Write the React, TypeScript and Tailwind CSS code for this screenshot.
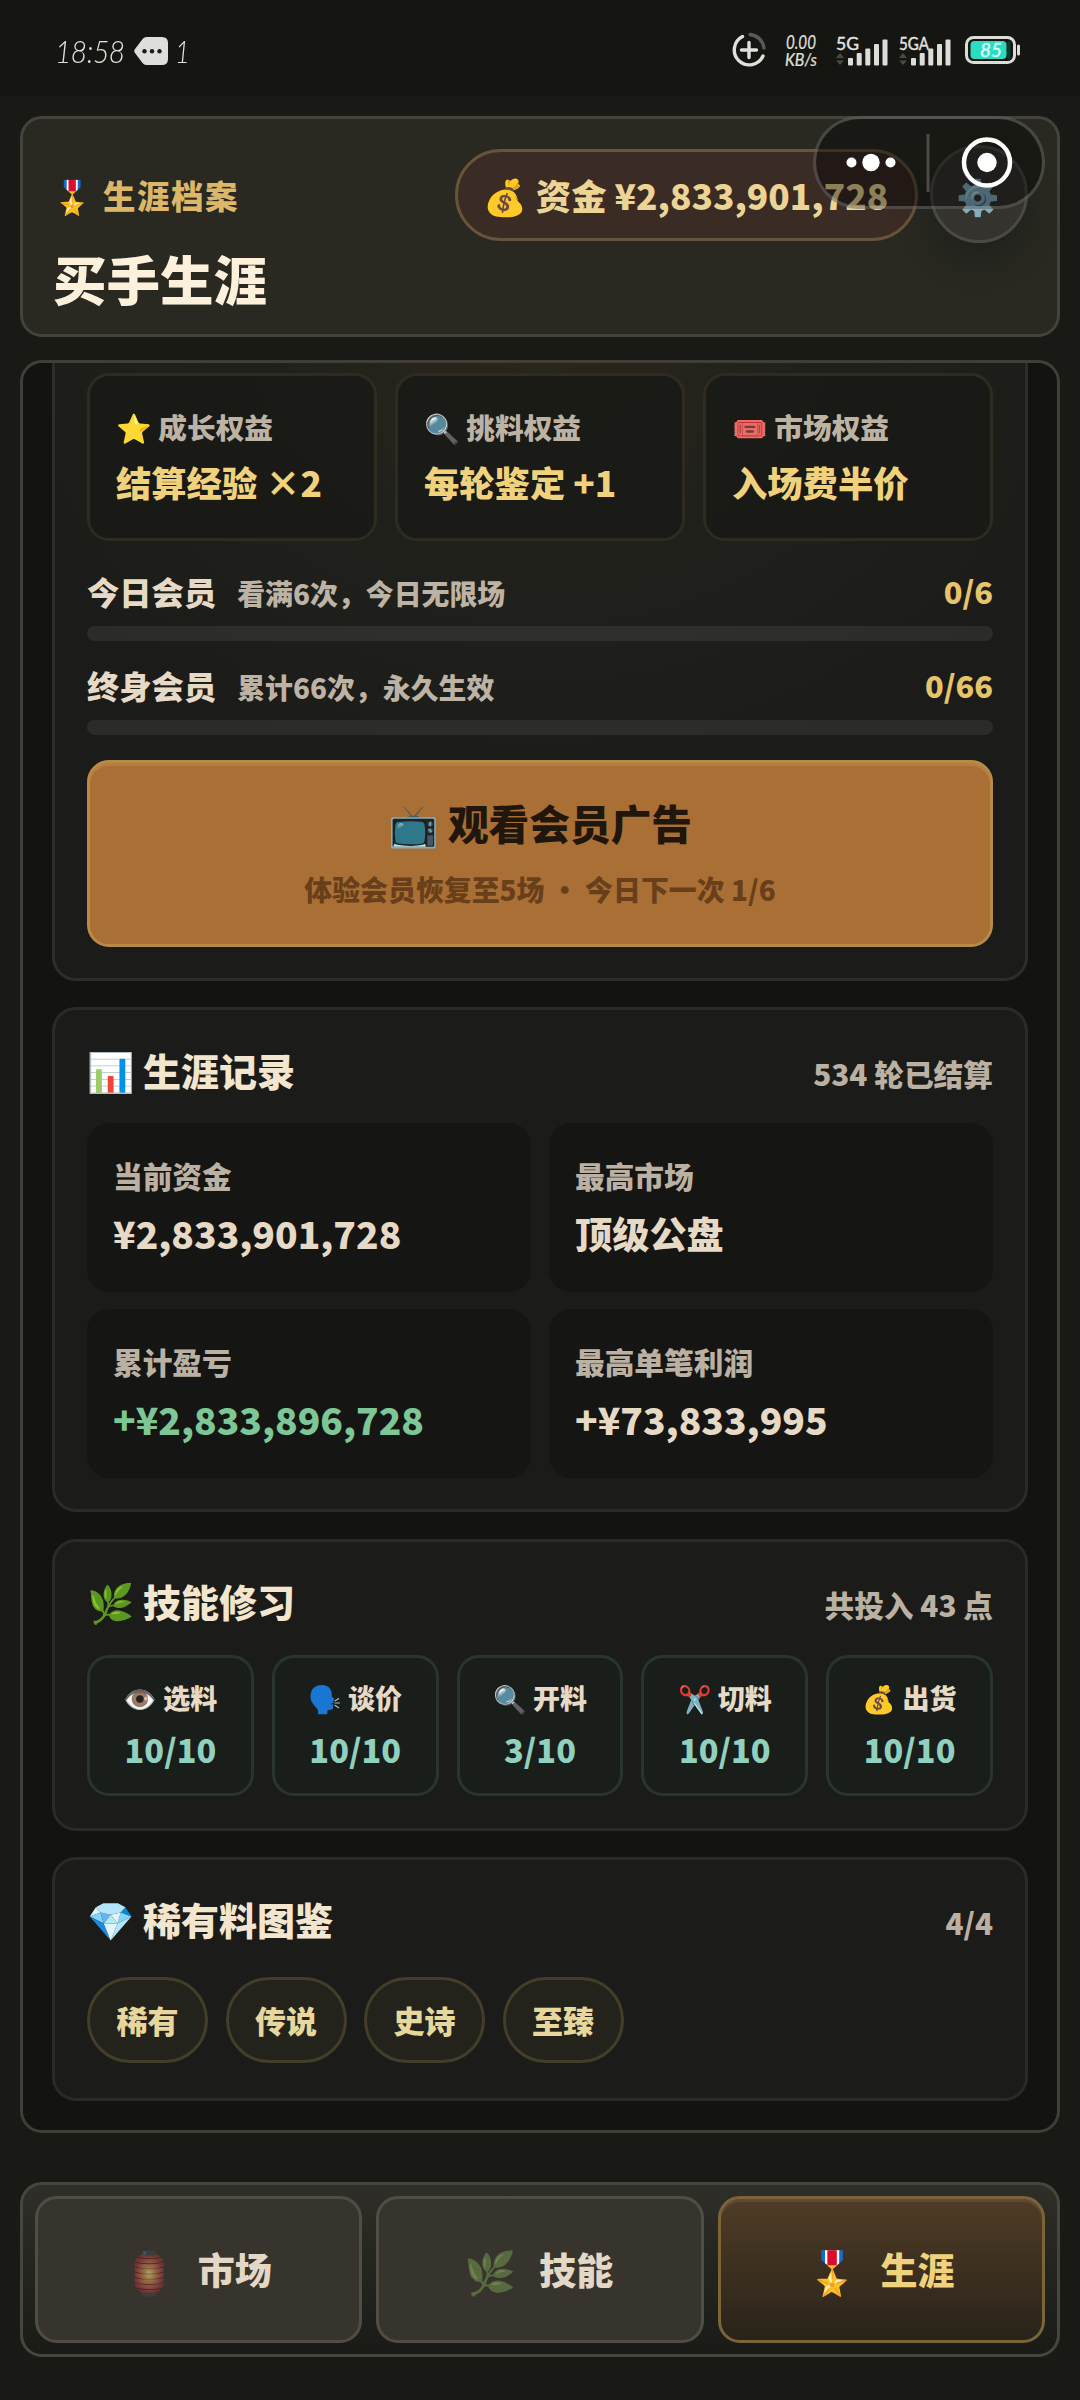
import type { ReactNode } from "react";

const perks = [
  { icon: "⭐", label: "成长权益", value: "结算经验 ×2" },
  { icon: "🔍", label: "挑料权益", value: "每轮鉴定 +1" },
  { icon: "🎟️", label: "市场权益", value: "入场费半价" },
];

const memberships = [
  { name: "今日会员", note: "看满6次，今日无限场", progress: "0/6", gap: "mt-[30px]" },
  { name: "终身会员", note: "累计66次，永久生效", progress: "0/66", gap: "mt-[24px]" },
];

const records = [
  { label: "当前资金", value: "¥2,833,901,728", color: "text-[#e6dac6]" },
  { label: "最高市场", value: "顶级公盘", color: "text-[#e6dac6]" },
  { label: "累计盈亏", value: "+¥2,833,896,728", color: "text-[#7cc795]" },
  { label: "最高单笔利润", value: "+¥73,833,995", color: "text-[#e6dac6]" },
];

const skills = [
  { icon: "👁️", label: "选料", value: "10/10" },
  { icon: "🗣️", label: "谈价", value: "10/10" },
  { icon: "🔍", label: "开料", value: "3/10" },
  { icon: "✂️", label: "切料", value: "10/10" },
  { icon: "💰", label: "出货", value: "10/10" },
];

const rarities = ["稀有", "传说", "史诗", "至臻"];

function Signal({ label, labelWidth }: { label: string; labelWidth: number }) {
  return (
    <svg className="overflow-visible" width="54" height="54" viewBox="0 -10 54 54" fill="#dcdcd8">
      <text
        x="0"
        y="15.500"
        fontSize="18"
        fontFamily="Lato"
        fill="#e4e4e0"
        stroke="#e4e4e0"
        strokeWidth="0.4"
        textLength={labelWidth}
        lengthAdjust="spacingAndGlyphs"
      >
        {label}
      </text>
      <path d="M0 24 4 19 8 24ZM0 26.500 4 31 8 26.500Z" fill="#4a4a46" />
      <rect x="12" y="24" width="5" height="7.500" rx="1" />
      <rect x="20.700" y="19" width="5" height="12.500" rx="1" />
      <rect x="29.300" y="14.500" width="5" height="17" rx="1" />
      <rect x="38" y="10" width="5" height="21.500" rx="1" />
      <rect x="46.500" y="5.500" width="5" height="26" rx="1" />
    </svg>
  );
}

function StatusBar() {
  return (
    <div className="flex h-[96px] shrink-0 items-start justify-between bg-[#151611] pl-[54px] pr-[59px] font-['Lato'] text-[#e0e0dc]">
      <div className="flex h-[102px] items-center">
        <span className="w-[68px] origin-left scale-x-[0.88] pl-[1px] text-[32px] leading-[44px] font-light whitespace-nowrap italic tracking-[-0.5px]">18:58</span>
        <svg className="ml-[12px]" width="34" height="28" viewBox="0 0 34 28">
          <path d="M9 1.500Q10.500 0 12.500 0H28Q34 0 34 6V22Q34 28 28 28H12.500Q10 28 8.500 26L1 16Q-.5 14 1 12Z" fill="#dededc" />
          <circle cx="10.500" cy="14.300" r="2.200" fill="#1b1b18" />
          <circle cx="18" cy="14.300" r="2.200" fill="#1b1b18" />
          <circle cx="25.500" cy="14.300" r="2.200" fill="#1b1b18" />
        </svg>
        <span className="ml-[7px] origin-left scale-x-[0.8] text-[32px] leading-[44px] font-light italic">1</span>
      </div>
      <div className="flex h-[100px] items-center">
        <svg width="34" height="36" viewBox="0 0 34 36" fill="none" strokeWidth="3.400" strokeLinecap="round">
          <path d="M10.500 4.500A15 15 0 1 0 31 24" stroke="#e0e0dc" />
          <path d="M18 2.500A15.500 15.500 0 0 1 32 16" stroke="#5a5a57" />
          <path d="M17 10.500V25.500M9.500 18H24.500" stroke="#e0e0dc" />
        </svg>
        <svg className="ml-[14px] overflow-visible" width="42" height="54" viewBox="-4 0 42 54" fontFamily="Lato" fontStyle="italic" fill="#e0e0dc" stroke="#e0e0dc" strokeWidth="0.2">
          <text x="2" y="25.500" fontSize="19" textLength="30" lengthAdjust="spacingAndGlyphs">
            0.00
          </text>
          <text x="1" y="42.500" fontSize="17" textLength="32" lengthAdjust="spacingAndGlyphs">
            KB/s
          </text>
        </svg>
        <div className="ml-[14px] pt-[2px]">
          <Signal label="5G" labelWidth={23} />
        </div>
        <div className="ml-[9px] pt-[2px]">
          <Signal label="5GA" labelWidth={30} />
        </div>
        <svg className="ml-[12px]" width="56" height="28" viewBox="0 0 56 28">
          <rect x="1.500" y="1.500" width="48" height="25" rx="7" fill="none" stroke="#dcdcd8" strokeWidth="3" />
          <rect x="5.500" y="5" width="36" height="18" rx="4" fill="#2bdcc0" />
          <rect x="42.500" y="5" width="3" height="18" rx="1.500" fill="#0c3b34" />
          <rect x="52" y="8.500" width="3" height="11" rx="1.500" fill="#dcdcd8" />
          <text x="15" y="20.500" fontSize="19" fontFamily="Lato" fontStyle="italic" fill="#d8fff6" stroke="#d8fff6" strokeWidth="0.4" textLength="22">
            85
          </text>
        </svg>
      </div>
    </div>
  );
}

function MiniProgramCapsule() {
  return (
    <div className="absolute top-[116px] left-[813px] flex h-[93px] w-[232px] items-center rounded-full border-[3px] border-white/20 bg-black/40">
      <svg width="226" height="87" viewBox="0 0 226 87" fill="#fff">
        <circle cx="35.500" cy="43.500" r="5" />
        <circle cx="55" cy="43.500" r="8.700" />
        <circle cx="74.500" cy="43.500" r="5" />
        <rect x="110.500" y="15" width="3" height="58" fill="#4a4a46" />
        <circle cx="171" cy="43.500" r="23" fill="none" stroke="#fff" strokeWidth="4.500" />
        <circle cx="171" cy="43.500" r="9.700" />
      </svg>
    </div>
  );
}

function Header() {
  return (
    <header className="mx-[20px] mt-[20px] flex h-[221px] shrink-0 justify-between rounded-[22px] border-[3px] border-[#43433c] bg-[#292922] pr-[29px] pl-[30px]">
      <div className="pt-[51px]">
        <div className="-ml-[1px] text-[32.500px] leading-[50px] font-black tracking-[1.500px] text-[#dcb768]">🎖️ 生涯档案</div>
        <h1 className="mt-[23px] text-[53.500px] leading-[70px] font-black text-[#fdf1dc]">买手生涯</h1>
      </div>
      <div className="flex items-start gap-[12px] pt-[26px]">
        <div className="mt-[4px] flex h-[92px] w-[463px] items-center justify-center rounded-full border-[3px] border-[#67543a] bg-[#3a2b25] pr-[1px] pb-[1px] text-[35.300px] leading-none font-black whitespace-nowrap text-[#ecd594]">
          💰 资金 ¥2,833,901,728
        </div>
        <div className="flex size-[98px] items-center justify-center rounded-full border-[3px] border-[#4b4943] bg-[#35332d] pr-[2px] text-[35px] leading-none shadow-[0_18px_36px_rgba(0,0,0,0.22)]">
          ⚙️
        </div>
      </div>
    </header>
  );
}

function Section({ title, aside, className, children }: { title: string; aside: string; className: string; children: ReactNode }) {
  return (
    <section className={"shrink-0 rounded-[24px] border-[3px] border-[#2a2a27] bg-[#1b1b19] px-[32px] " + className}>
      <div className="flex h-[56px] items-center justify-between">
        <h2 className="text-[38px] leading-[56px] font-black text-[#f3e6cf]">{title}</h2>
        <span className="pt-[7px] text-[29.700px] leading-[50px] font-black text-[#bbb1a3]">{aside}</span>
      </div>
      {children}
    </section>
  );
}

function Membership() {
  return (
    <section className="h-[618px] shrink-0 rounded-b-[24px] border-[3px] border-t-0 border-[#2c2c29] bg-[#1b1b19] bg-[radial-gradient(ellipse_60%_75%_at_50%_-5%,#2a261a_0%,#21211c_45%,#1b1b19_100%)] px-[32px] pt-[10px]">
      <div className="grid grid-cols-3 gap-[18px]">
        {perks.map((p) => (
          <div key={p.label} className="h-[168px] rounded-[22px] border-[3px] border-[#2f2b21] bg-[#191915]/85 pt-[31px] pl-[26px]">
            <div className="text-[28.700px] leading-[40px] font-black text-[#bdb3a5]">
              {p.icon} {p.label}
            </div>
            <div className="mt-[10px] text-[35.300px] leading-[50px] font-black text-[#f0d27c]">{p.value}</div>
          </div>
        ))}
      </div>
      {memberships.map((m) => (
        <div key={m.name} className={m.gap}>
          <div className="flex h-[40px] items-center justify-between">
            <div className="flex items-center gap-[21px]">
              <span className="text-[32.300px] leading-[40px] font-black text-[#e6dac6]">{m.name}</span>
              <span className="pt-[3px] text-[27.900px] leading-[40px] font-black text-[#bdb3a5]">{m.note}</span>
            </div>
            <span className="text-[30.800px] leading-[40px] font-black text-[#e6c469]">{m.progress}</span>
          </div>
          <div className="mt-[15px] h-[15px] rounded-full bg-white/[0.075]" />
        </div>
      ))}
      <button className="mt-[25px] flex h-[187px] w-full flex-col items-center rounded-[22px] border-[3px] border-[#b98a45] bg-[#a96f34] pt-[32px] shadow-[inset_0_3px_0_#b37d44]">
        <span className="text-[40.700px] leading-[56px] font-black text-[#21160c]">📺 观看会员广告</span>
        <span className="mt-[18px] text-[27.900px] leading-[40px] font-black text-[#693f1b]">体验会员恢复至5场 · 今日下一次 1/6</span>
      </button>
    </section>
  );
}

function NavBar() {
  return (
    <nav className="mx-[20px] mt-[49px] grid h-[175px] shrink-0 grid-cols-3 gap-[14px] rounded-[22px] border-[3px] border-[#46453e] bg-gradient-to-b from-[#2f2e28] to-[#1a1b17] px-[12px] py-[11px]">
      {[
        { icon: "🏮", label: "市场" },
        { icon: "🌿", label: "技能" },
      ].map((t) => (
        <button
          key={t.label}
          className="flex h-[147px] items-center justify-center gap-[22px] rounded-[22px] border-[3px] border-[#504d45] bg-[#37342e] pr-[2px] text-[37px] font-black text-[#e3d8c6]"
        >
          <span className="text-[42px] leading-none opacity-60 grayscale-[45%]">{t.icon}</span>
          <span>{t.label}</span>
        </button>
      ))}
      <button className="flex h-[147px] items-center justify-center gap-[22px] rounded-[22px] border-[3px] border-[#7b6437] bg-gradient-to-b from-[#503c25] to-[#29231a] pr-[2px] text-[37px] font-black text-[#f0d27c] shadow-[inset_0_3px_0_rgba(255,255,255,0.08)]">
        <span className="text-[42px] leading-none">🎖️</span>
        <span>生涯</span>
      </button>
    </nav>
  );
}

export default function App() {
  return (
    <div className="relative flex h-[2400px] w-[1080px] flex-col overflow-hidden bg-[#191a15] font-['Noto_Sans_CJK_SC','Noto_Color_Emoji',sans-serif]">
      <StatusBar />
      <Header />
      <main className="mx-[20px] mt-[23px] flex h-[1773px] shrink-0 flex-col overflow-hidden rounded-[22px] border-[3px] border-[#3f3e37] bg-[#131311] px-[29px]">
        <Membership />
        <Section title="📊 生涯记录" aside="534 轮已结算" className="mt-[26px] h-[505px] pt-[32px]">
          <div className="mt-[25px] grid grid-cols-2 gap-x-[18px] gap-y-[17px]">
            {records.map((r) => (
              <div key={r.label} className="h-[169px] rounded-[22px] bg-[#151513] pt-[33px] pl-[26px]">
                <div className="text-[29.700px] leading-[40px] font-black text-[#bbb1a3]">{r.label}</div>
                <div className={"mt-[12px] text-[37.200px] leading-[50px] font-black " + r.color}>{r.value}</div>
              </div>
            ))}
          </div>
        </Section>
        <Section title="🌿 技能修习" aside="共投入 43 点" className="mt-[27px] h-[292px] pt-[31px]">
          <div className="mt-[26px] grid grid-cols-5 gap-[18px]">
            {skills.map((s) => (
              <div key={s.label} className="h-[141px] rounded-[22px] border-[3px] border-[#27342f] bg-[#1a1e1a] pt-[20px] text-center">
                <div className="text-[27px] leading-[40px] font-black whitespace-nowrap text-[#e6dac6]">
                  {s.icon} {s.label}
                </div>
                <div className="mt-[6px] text-[32.500px] leading-[50px] font-black text-[#8fd0bf]">{s.value}</div>
              </div>
            ))}
          </div>
        </Section>
        <Section title="💎 稀有料图鉴" aside="4/4" className="mt-[26px] h-[244px] pt-[31px]">
          <div className="mt-[30px] flex gap-[17.500px]">
            {rarities.map((r) => (
              <span
                key={r}
                className="flex h-[86px] w-[121px] items-center justify-center rounded-full border-[3px] border-[#433d29] bg-[#24231b] pb-[2px] text-[31px] leading-none font-black text-[#e8d79c]"
              >
                {r}
              </span>
            ))}
          </div>
        </Section>
      </main>
      <NavBar />
      <MiniProgramCapsule />
    </div>
  );
}
